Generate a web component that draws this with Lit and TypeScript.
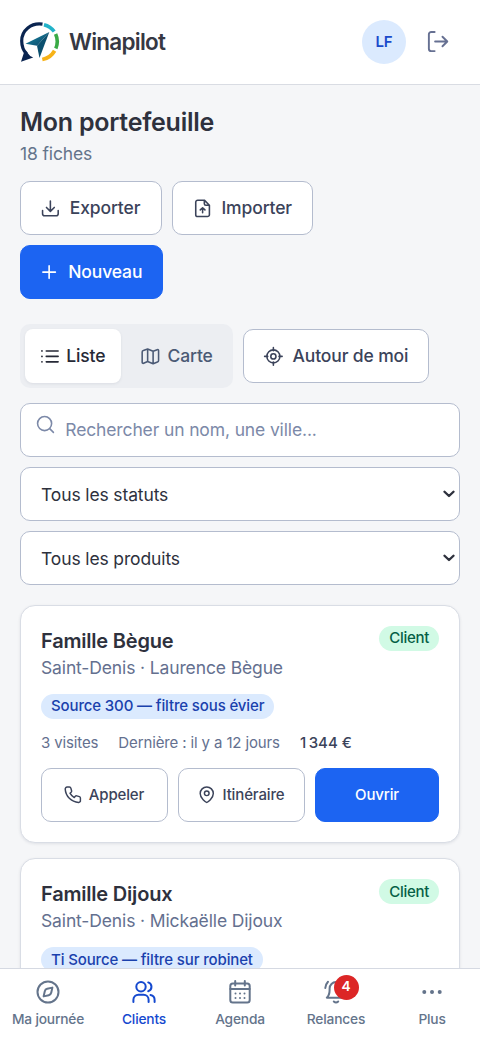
import { LitElement, html, svg, css } from "lit";
import { customElement, property } from "lit/decorators.js";

const icons: Record<string, unknown> = {
  download: svg`<path d="M12 2.500v13M7 10.800l5 5 5-5M2 14.800v4a2.600 2.600 0 0 0 2.600 2.600h14.800a2.600 2.600 0 0 0 2.600-2.600v-4"/>`,
  fileUp: svg`<path d="M14.500 1.500H6A2.500 2.500 0 0 0 3.500 4v16A2.500 2.500 0 0 0 6 22.500h12.500A2.500 2.500 0 0 0 21 20V8zM14.500 1.500V6a2 2 0 0 0 2 2H21M12.300 17.500v-5.500M9.300 14l3-2.700 3 2.700"/>`,
  plus: svg`<path d="M12 2.800v18.400M2.800 12h18.400" stroke-width="2.400"/>`,
  list: svg`<path d="M8 5h15.200M8 12h15.200M8 19h15.200"/><path d="M2.500 5h.01M2.500 12h.01M2.500 19h.01" stroke-width="2.300"/>`,
  map: svg`<path d="M8.500 2.500 3 4.600A1.800 1.800 0 0 0 1.500 6.400v13.200c0 1 .8 1.600 1.800 1.200l5.200-2.300 7 3 5.600-2.300a1.900 1.900 0 0 0 1.400-1.800V4.600c0-1-.8-1.600-1.800-1.200l-5.200 2.100zM8.500 2.500v16M15.500 5.500v16"/>`,
  target: svg`<circle cx="12" cy="12" r="8.300"/><circle cx="12" cy="12" r="3.300"/><path d="M12 .8v4M12 19.200v4M.8 12h4M19.200 12h4"/>`,
  search: svg`<circle cx="11" cy="11" r="9"/><path d="m17.500 17.500 4.800 4.700"/>`,
  phone: svg`<path d="M4.300 1.500h3.200a2 2 0 0 1 1.900 1.400l1 3.600a2 2 0 0 1-.6 2l-1.600 1.400a14.500 14.500 0 0 0 5.900 5.900l1.400-1.600a2 2 0 0 1 2-.6l3.600 1a2 2 0 0 1 1.400 1.900v3.200a2.300 2.300 0 0 1-2.500 2.800C10 21.900 2.200 14 1.700 4.300A2.500 2.500 0 0 1 4.300 1.500z"/>`,
  pin: svg`<path d="M12 22.500c-1.200 0-9-5.500-9-12.200a9 9 0 0 1 18 0c0 6.700-7.800 12.200-9 12.200z"/><circle cx="12" cy="10" r="3.200"/>`,
  logout: svg`<path d="M9 2H5.500A2.500 2.500 0 0 0 3 4.500v15A2.500 2.500 0 0 0 5.500 22H9M9.500 12H22M17.200 7l5 5-5 5"/>`,
  compass: svg`<circle cx="12" cy="12" r="10.500"/><path d="m7.600 16.400 1.200-5.200a3.200 3.200 0 0 1 2.400-2.400l5.200-1.200-1.200 5.200a3.200 3.200 0 0 1-2.400 2.400z"/>`,
  users: svg`<circle cx="9" cy="6.800" r="4.700"/><path d="M1.400 22v-2.300a5 5 0 0 1 5-5h5.200a5 5 0 0 1 5 5V22M16.200 2.400a4.600 4.600 0 0 1 0 8.800M18.500 15a5 5 0 0 1 4.100 5v2"/>`,
  calendar: svg`<rect x="2.300" y="3.500" width="19.400" height="19" rx="2.500"/><path d="M2.300 9h19.400M7.200 1v4.500M16.800 1v4.500"/><path d="M7.500 13.600h.01M12 13.600h.01M16.500 13.600h.01M7.500 18h.01M12 18h.01M16.500 18h.01" stroke-width="2"/>`,
  bell: svg`<path d="M2.800 17.700h18.400C19.300 16 18.400 13.500 18.400 10V8.500a6.400 6.400 0 0 0-12.800 0V10c0 3.500-.9 6-2.800 7.700zM9.800 21.500a3.200 3.200 0 0 0 4.400 0M4 1.800A10 10 0 0 0 1.300 8M20 1.800A10 10 0 0 1 22.700 8"/>`,
  dots: svg`<path d="M4.300 12h.01M12 12h.01M19.700 12h.01" stroke-width="4"/>`,
  chevron: svg`<path d="m3 7.500 9 8.500 9-8.500" stroke-width="4.800"/>`,
};

@customElement("ui-icon")
class UiIcon extends LitElement {
  static styles = css`
    :host { display: block; flex: none; width: 18.75px; height: 18.75px; }
    .glyph { display: block; width: 100%; height: 100%; overflow: visible; fill: none;
      stroke: currentColor; stroke-width: 2; stroke-linecap: round; stroke-linejoin: round; }
  `;
  @property() name = "";
  render() {
    return html`<svg class="glyph" viewBox="0 0 24 24">${icons[this.name]}</svg>`;
  }
}

interface Client { name: string; place: string; product: string; visits: string; last: string; amount: string; }

const clients: Client[] = [
  { name: "Famille Bègue", place: "Saint-Denis · Laurence Bègue", product: "Source 300 — filtre sous évier", visits: "3 visites", last: "Dernière : il y a 12 jours", amount: "1\u202f344 €" },
  { name: "Famille Dijoux", place: "Saint-Denis · Mickaëlle Dijoux", product: "Ti Source — filtre sur robinet", visits: "", last: "", amount: "" },
];

const tabs = [
  { label: "Ma journée", icon: "compass" },
  { label: "Clients", icon: "users", active: true },
  { label: "Agenda", icon: "calendar" },
  { label: "Relances", icon: "bell", count: 4 },
  { label: "Plus", icon: "dots" },
];

@customElement("app-root")
class AppRoot extends LitElement {
  static styles = css`
    * { box-sizing: border-box; }
    :host { display: flex; flex-direction: column; height: 100vh; overflow: hidden; background: #f5f6f8;
      color: #2e313d; font-family: Inter, sans-serif; font-size: 17.5px; line-height: 25px; letter-spacing: -0.13px; }
    .header { flex: none; display: flex; align-items: center; height: 85px; padding: 0 20px;
      background: #fff; border-bottom: 1px solid #d9dce3; }
    .logo { width: 40px; height: 40px; display: block; }
    .brand { margin: -2px 0 0 9px; flex: 1; font-size: 22.5px; font-weight: 600; letter-spacing: -0.75px; color: #363843; }
    .avatar { width: 44px; height: 44px; border-radius: 50%; background: #dbeafe; color: #1a4bcb;
      display: grid; place-items: center; padding-bottom: 1px; font-size: 15px; font-weight: 600; }
    .logout { width: 23px; height: 23px; margin: -1px 11px 0 20px; color: #667092; }
    .main { flex: 1; min-height: 0; overflow: hidden; padding: 21px 20px 0; }
    .title { margin: 0; font-size: 25px; line-height: 32px; font-weight: 600; letter-spacing: -0.25px; }
    .count { margin: 3px 0 15px; line-height: 25px; color: #64748b; }
    .row { display: flex; flex-wrap: wrap; gap: 10px; }
    .btn { display: flex; align-items: center; justify-content: center; gap: 10px; height: 54px; padding: 0 20px;
      margin: 0; border: 1px solid #b4bcce; border-radius: 10px; background: #fff; color: #3b435a;
      font: inherit; line-height: 24px; letter-spacing: inherit; font-weight: 500; white-space: nowrap; }
    .primary { background: #1c64f2; border-color: #1c64f2; color: #fff; }
    .row .btn { padding: 0 20.4px 0 20px; }
    .row .primary { gap: 11px; padding: 0 19.5px 0 20px; }
    .row .primary ui-icon { width: 16.25px; height: 16.25px; }
    .views { display: flex; align-items: center; gap: 10px; margin-top: 25px; }
    .segment { display: flex; gap: 5px; padding: 5px 5px 5px 4.5px; height: 64px; border-radius: 10px; background: #eceef2; }
    .seg { display: flex; align-items: center; gap: 8px; height: 54px; padding: 0 15px; border-radius: 8px;
      line-height: 24px; font-weight: 500; color: #4b5a75; }
    .on { padding-right: 15.3px; background: #fff; color: #262936; box-shadow: 0 1px 3px rgba(30, 40, 70, 0.08); }
    .filters { display: grid; gap: 10px; margin: 15px 0 19.5px; }
    .field { display: flex; align-items: center; height: 54px; padding: 0 4px 0 20px; background: #fff;
      border: 1px solid #b4bcce; border-radius: 10px; }
    .search { padding: 0 15px 2px 14.500px; gap: 11px; color: #7c89a8; }
    .search ui-icon { margin-top: -9px; }
    .select { justify-content: space-between; }
    .select ui-icon { width: 12px; height: 12px; }
    .cards { display: grid; gap: 15px; }
    .card { padding: 20px; background: #fff; border: 1px solid #d9dde5; border-radius: 15px;
      box-shadow: 0 1px 3px rgba(30, 40, 70, 0.1); }
    .top { display: flex; justify-content: space-between; align-items: flex-start; }
    .name { margin: 0; padding-top: 1px; font-size: 20px; line-height: 28px; font-weight: 600; letter-spacing: -0.2px; }
    .place { color: #64708f; line-height: 26px; }
    .chip { display: inline-flex; align-items: center; height: 25px; padding: 0 10px 1px; border-radius: 13px;
      font-size: 15px; font-weight: 500; white-space: nowrap; }
    .green { padding: 0 9.8px 1px; letter-spacing: -0.25px; background: #d1fae5; color: #065f46; }
    .blue { background: #dbeafe; color: #1a41ad; }
    .products { display: flex; margin-top: 13px; }
    .stats { display: flex; gap: 20px; height: 22px; margin-top: 13px; font-size: 15px; line-height: 22px; color: #64708f; }
    .amount { font-weight: 500; letter-spacing: -0.25px; color: #3b435a; }
    .actions { display: grid; grid-template-columns: 126.5px 127.5px 1fr; gap: 10px; margin-top: 14.500px; }
    .actions .btn { font-size: 15px; gap: 7px; padding: 0 0 1px; }
    .actions ui-icon { width: 17.5px; height: 17.5px; }
    .nav { flex: none; display: grid; grid-template-columns: repeat(5, 1fr); height: 71px; padding-top: 11px;
      background: #fff; border-top: 1px solid #d5d9e2; z-index: 1; }
    .tab { display: flex; flex-direction: column; align-items: center; gap: 5px; font-size: 13.75px;
      line-height: 20px; font-weight: 500; letter-spacing: -0.18px; color: #64748b; }
    .active { color: #1549cf; }
    .pic { position: relative; }
    .pic ui-icon { width: 24px; height: 24px; }
    .badge { position: absolute; left: 9.5px; top: -5.5px; width: 25px; height: 25px; border-radius: 50%;
      background: #dc2626; color: #fff; display: grid; place-items: center; padding-bottom: 2px; font-size: 13.75px; font-weight: 600; }
  `;

  logo() {
    return html`<svg class="logo" viewBox="0 0 40 40" fill="none">
      <defs><linearGradient id="g" x1="0" y1="0" x2="1" y2="1"><stop offset="0" stop-color="#1b8fa8" /><stop offset="1" stop-color="#0b4266" /></linearGradient></defs>
      <path d="M22.500 2.200C11 .5 1.700 8.500 1.700 19c0 5.500 2 10 5 13" stroke="#0a2450" stroke-width="3.200" />
      <path d="M4.300 29.500 1 39.700l12.200-4.200-3-1.600-3.800-4.500z" fill="#0a2450" />
      <path d="M24 2.700a18 18 0 0 1 10.200 6.800" stroke="#22b3c9" stroke-width="3.600" />
      <path d="M35.600 12a18 18 0 0 1 .2 14.500" stroke="#3aaa45" stroke-width="3.600" />
      <path d="M34.600 28.700A18 18 0 0 1 22.300 37.500" stroke="#f7b217" stroke-width="3.800" />
      <path d="M29.300 10 5.500 21.700l11.500 2.100z" fill="url(#g)" />
      <path d="M29.300 10 17 23.800 19.500 36z" fill="#0c506f" />
    </svg>`;
  }

  card(c: Client) {
    return html`<article class="card">
      <div class="top">
        <div><h2 class="name">${c.name}</h2><div class="place">${c.place}</div></div>
        <span class="chip green">Client</span>
      </div>
      <div class="products"><span class="chip blue">${c.product}</span></div>
      ${c.visits ? html`<div class="stats"><span>${c.visits}</span><span>${c.last}</span><span class="amount">${c.amount}</span></div>
      <div class="actions">
        <button class="btn"><ui-icon name="phone"></ui-icon>Appeler</button>
        <button class="btn"><ui-icon name="pin"></ui-icon>Itinéraire</button>
        <button class="btn primary">Ouvrir</button>
      </div>` : html`<div class="stats"></div>`}
    </article>`;
  }

  render() {
    return html`
      <header class="header">
        ${this.logo()}
        <span class="brand">Winapilot</span>
        <span class="avatar">LF</span>
        <ui-icon class="logout" name="logout"></ui-icon>
      </header>
      <main class="main">
        <h1 class="title">Mon portefeuille</h1>
        <p class="count">18 fiches</p>
        <div class="row">
          <button class="btn"><ui-icon name="download"></ui-icon>Exporter</button>
          <button class="btn"><ui-icon name="fileUp"></ui-icon>Importer</button>
          <button class="btn primary"><ui-icon name="plus"></ui-icon>Nouveau</button>
        </div>
        <div class="views">
          <div class="segment">
            <span class="seg on"><ui-icon name="list"></ui-icon>Liste</span>
            <span class="seg"><ui-icon name="map"></ui-icon>Carte</span>
          </div>
          <button class="btn"><ui-icon name="target"></ui-icon>Autour de moi</button>
        </div>
        <div class="filters">
          <div class="field search"><ui-icon name="search"></ui-icon><span>Rechercher un nom, une ville...</span></div>
          <div class="field select"><span>Tous les statuts</span><ui-icon name="chevron"></ui-icon></div>
          <div class="field select"><span>Tous les produits</span><ui-icon name="chevron"></ui-icon></div>
        </div>
        <div class="cards">${clients.map((c) => this.card(c))}</div>
      </main>
      <nav class="nav">
        ${tabs.map((t) => html`<div class="tab ${t.active ? "active" : ""}">
          <span class="pic"><ui-icon name=${t.icon}></ui-icon>${t.count ? html`<span class="badge">${t.count}</span>` : ""}</span>
          <span>${t.label}</span>
        </div>`)}
      </nav>`;
  }
}
